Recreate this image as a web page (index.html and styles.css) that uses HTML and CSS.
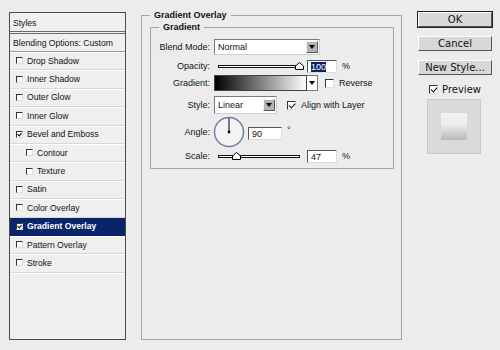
FILE: index.html
```html
<!DOCTYPE html>
<html lang="en">

<head>
    <meta charset="UTF-8">
    <title>Layer Style</title>
    <link rel="stylesheet" href="styles.css">
</head>

<body>
    <div class="dialog">
        <div class="styles-list">
            <div class="list-head">Styles</div>
            <div class="list-row blend">Blending Options: Custom</div>
            <div class="list-row"><span class="cb"></span>Drop Shadow</div>
            <div class="list-row"><span class="cb"></span>Inner Shadow</div>
            <div class="list-row"><span class="cb"></span>Outer Glow</div>
            <div class="list-row"><span class="cb"></span>Inner Glow</div>
            <div class="list-row"><span class="cb checked"></span>Bevel and Emboss</div>
            <div class="list-row sub"><span class="cb"></span>Contour</div>
            <div class="list-row sub"><span class="cb"></span>Texture</div>
            <div class="list-row"><span class="cb"></span>Satin</div>
            <div class="list-row"><span class="cb"></span>Color Overlay</div>
            <div class="list-row selected"><span class="cb checked"></span>Gradient Overlay</div>
            <div class="list-row"><span class="cb"></span>Pattern Overlay</div>
            <div class="list-row"><span class="cb"></span>Stroke</div>
        </div>

        <fieldset class="group outer">
            <legend>Gradient Overlay</legend>
            <fieldset class="group inner">
                <legend>Gradient</legend>

                <div class="form-row r-blend">
                    <span class="label">Blend Mode:</span>
                    <div class="select wide"><span>Normal</span><span class="drop"></span></div>
                </div>

                <div class="form-row r-opacity">
                    <span class="label">Opacity:</span>
                    <div class="slider">
                        <div class="track"></div>
                        <svg class="thumb" style="left: 100%" width="9" height="8" viewBox="0 0 9 8">
                            <path d="M0.5 7.5 L0.5 4 L4.5 0.5 L8.5 4 L8.5 7.5 Z" fill="#fff" stroke="#000" />
                        </svg>
                    </div>
                    <div class="field num"><span class="hl">100</span></div>
                    <span class="unit">%</span>
                </div>

                <div class="form-row r-gradient">
                    <span class="label">Gradient:</span>
                    <div class="swatch"></div>
                    <span class="drop small"></span>
                    <span class="cb big"></span>
                    <span class="opt">Reverse</span>
                </div>

                <div class="form-row r-style">
                    <span class="label">Style:</span>
                    <div class="select narrow"><span>Linear</span><span class="drop"></span></div>
                    <span class="cb big checked"></span>
                    <span class="opt">Align with Layer</span>
                </div>

                <div class="form-row r-angle">
                    <span class="label">Angle:</span>
                    <svg class="dial" width="32" height="32" viewBox="0 0 32 32">
                        <circle cx="16" cy="16" r="14.5" fill="#f3f3f3" stroke="#7180a0" stroke-width="1.5" />
                        <line x1="16" y1="16" x2="16" y2="2" stroke="#000" stroke-width="1" />
                        <circle cx="16" cy="16" r="1.4" fill="#000" />
                    </svg>
                    <div class="field angle">90</div>
                    <span class="deg">°</span>
                </div>

                <div class="form-row r-scale">
                    <span class="label">Scale:</span>
                    <div class="slider">
                        <div class="track"></div>
                        <svg class="thumb" style="left: 23%" width="9" height="8" viewBox="0 0 9 8">
                            <path d="M0.5 7.5 L0.5 4 L4.5 0.5 L8.5 4 L8.5 7.5 Z" fill="#fff" stroke="#000" />
                        </svg>
                    </div>
                    <div class="field num">47</div>
                    <span class="unit">%</span>
                </div>
            </fieldset>
        </fieldset>

        <div class="actions">
            <button class="btn default">OK</button>
            <button class="btn">Cancel</button>
            <button class="btn">New Style...</button>
            <label class="preview-check"><span class="cb big checked"></span>Preview</label>
            <div class="preview">
                <div class="preview-shape"></div>
            </div>
        </div>
    </div>
</body>

</html>
```

FILE: styles.css
```css
* {
    box-sizing: border-box;
}

body {
    margin: 0;
    background: #ececec;
    font-family: "Liberation Sans", Arial, sans-serif;
    font-size: 9px;
    color: #111;
}

.dialog {
    display: flex;
    align-items: flex-start;
    padding: 10px 0 0 9px;
    height: 350px;
}

/* Styles list on the left */
.styles-list {
    width: 117px;
    height: 328px;
    margin-top: 2px;
    border: 1px solid #4c4c4c;
    background: #efefef;
    font-size: 8.6px;
}

.list-head {
    height: 21px;
    padding: 5px 0 0 3px;
    border-bottom: 3px double #6a6a6a;
}

.list-row {
    display: flex;
    align-items: center;
    height: 18.4px;
    padding-left: 6px;
    border-bottom: 1px solid #d8d8d8;
    box-shadow: 0 1px 0 #fff;
}

.list-row.blend {
    padding-left: 3px;
    height: 18px;
    border-bottom: 1px solid #9a9a9a;
}

.list-row.sub {
    padding-left: 16px;
}

.list-row.selected {
    background: #0a246a;
    color: #fff;
    font-weight: bold;
    border-bottom-color: #0a246a;
}

.cb {
    display: inline-block;
    width: 7px;
    height: 7px;
    margin-right: 4px;
    border: 1px solid #333;
    border-right-color: #ddd;
    border-bottom-color: #ddd;
    background: #fff;
    position: relative;
}

.cb.checked::after {
    content: "";
    position: absolute;
    left: 1px;
    top: 0;
    width: 2px;
    height: 3px;
    border: solid #000;
    border-width: 0 1.5px 1.5px 0;
    transform: rotate(40deg);
}

.cb.big {
    width: 9px;
    height: 9px;
}

.cb.big.checked::after {
    left: 2px;
    top: 0;
    width: 3px;
    height: 5px;
}

/* Group boxes */
.group {
    border: 1px solid #a4a4a4;
    margin: 0;
}

.group legend {
    font-weight: bold;
    padding: 0 4px;
}

.outer {
    width: 261px;
    height: 330px;
    margin-left: 15px;
    padding: 2px 7px 0 8px;
}

.inner {
    height: 147px;
    padding: 7px 0 0 0;
}

.inner legend {
    margin-left: 8px;
}

.form-row {
    display: flex;
    align-items: center;
}

.label {
    width: 59px;
    margin-right: 4px;
    text-align: right;
}

.r-blend { height: 16px; }
.r-opacity { height: 14px; margin-top: 4px; }
.r-gradient { height: 16px; margin-top: 2px; }
.r-style { height: 18px; margin-top: 5px; }
.r-angle { height: 34px; margin-top: 1px; }
.r-scale { height: 14px; }

.select {
    display: flex;
    align-items: center;
    justify-content: space-between;
    height: 16px;
    padding: 0 1px 0 3px;
    background: #fff;
    border: 1px solid #7a7a7a;
    border-right-color: #d0d0d0;
    border-bottom-color: #d0d0d0;
}

.select.wide {
    width: 106px;
}

.select.narrow {
    width: 63px;
    height: 18px;
}

.drop {
    position: relative;
    width: 12px;
    height: 12px;
    background: #b4b4b4;
    border: 1px solid #f4f4f4;
    border-right-color: #5a5a5a;
    border-bottom-color: #5a5a5a;
}

.drop::after {
    content: "";
    position: absolute;
    left: 2px;
    top: 3px;
    border: 3px solid transparent;
    border-top: 4px solid #000;
}

.drop.small {
    height: 16px;
    width: 11px;
    background: #fff;
    border: 1px solid #7a7a7a;
    border-left: none;
}

.drop.small::after {
    left: 2px;
    top: 5px;
}

.slider {
    position: relative;
    width: 82px;
    height: 8px;
    margin-left: 4px;
}

.track {
    position: absolute;
    left: 0;
    right: 0;
    top: 3px;
    height: 3px;
    border: 1px solid #111;
    background: #fff;
}

.thumb {
    position: absolute;
    top: 0;
    margin-left: -5px;
}

.field {
    height: 13px;
    padding: 1px 0 0 3px;
    background: #fff;
    border: 1px solid #555;
    border-right-color: #ddd;
    border-bottom-color: #ddd;
    line-height: 10px;
}

.field.num {
    width: 30px;
    margin-left: 7px;
}

.hl {
    background: #0a246a;
    color: #fff;
}

.unit {
    margin-left: 5px;
}

.swatch {
    width: 93px;
    height: 16px;
    border: 1px solid #444;
    background: linear-gradient(to right, #000, #fff);
}

.r-gradient .cb {
    margin-left: 7px;
}

.r-style .cb {
    margin-left: 10px;
}

.opt {
    margin-left: 1px;
}

.dial {
    margin-left: -1px;
}

.field.angle {
    width: 34px;
    margin-left: 3px;
    margin-top: 3px;
}

.deg {
    margin-left: 5px;
    margin-top: -4px;
}

/* Buttons and preview on the right */
.actions {
    display: flex;
    flex-direction: column;
    align-items: center;
    width: 74px;
    margin: 2px 0 0 16px;
}

.btn {
    width: 74px;
    height: 15px;
    margin-bottom: 9px;
    padding: 0;
    font-family: "DejaVu Sans", sans-serif;
    font-size: 10px;
    color: #111;
    background: #d8d8d8;
    border: 1px solid #fff;
    border-right-color: #555;
    border-bottom-color: #555;
}

.btn.default {
    outline: 1px solid #222;
}

.preview-check {
    display: flex;
    align-items: center;
    font-family: "DejaVu Sans", sans-serif;
    font-size: 10px;
}

.preview {
    display: flex;
    justify-content: center;
    align-items: center;
    width: 54px;
    height: 55px;
    margin: 4px 2px 0 0;
    background: #dadada;
    border: 1px solid #c8c8c8;
}

.preview-shape {
    width: 26px;
    height: 27px;
    background: linear-gradient(#f3f3f3 0%, #ebebeb 45%, #b9b9b9 100%);
}
```
